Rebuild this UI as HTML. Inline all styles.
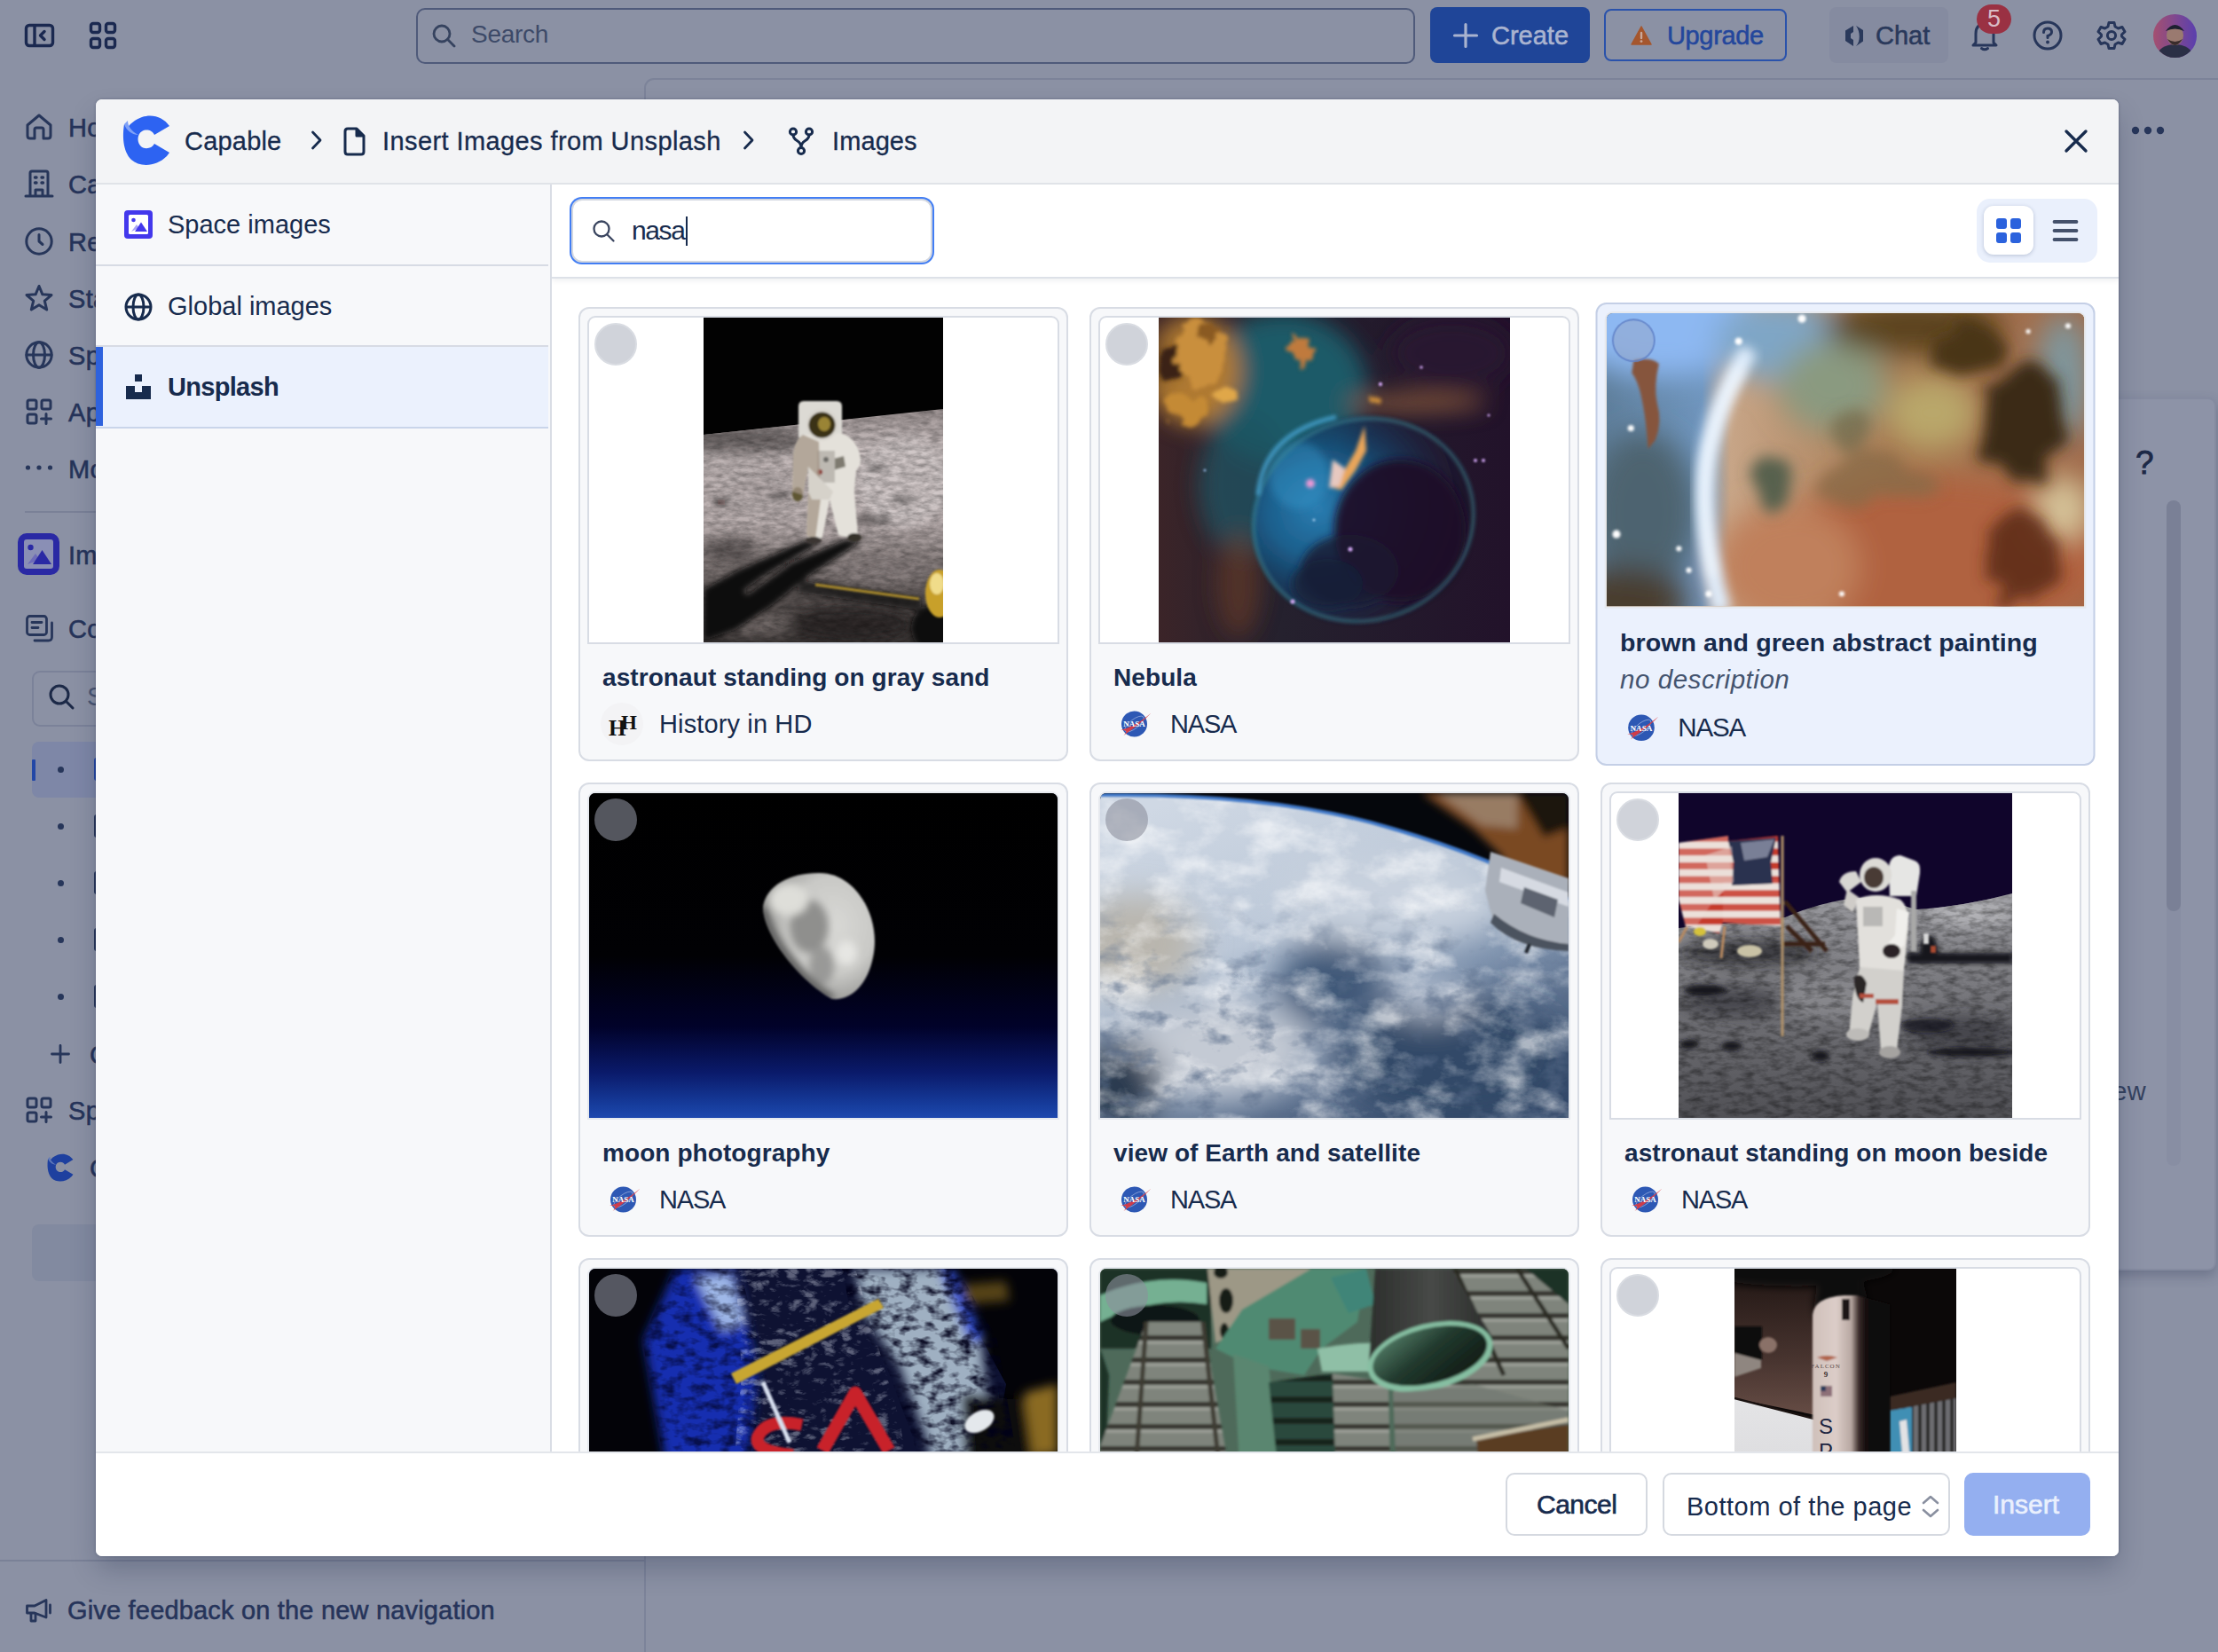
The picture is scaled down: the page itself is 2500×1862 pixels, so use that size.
<!DOCTYPE html>
<html lang="en">
<head>
<meta charset="utf-8">
<title>Insert Images from Unsplash</title>
<style>
*{box-sizing:border-box;margin:0;padding:0}
html,body{width:2500px;height:1862px;overflow:hidden}
body{font-family:"Liberation Sans",sans-serif;background:#8b91a4;color:#172b4d;position:relative}
.abs{position:absolute}
svg{display:block;position:absolute;overflow:visible}
.t{position:absolute;white-space:nowrap;line-height:1}
/* ---------- dimmed background page ---------- */
.bg .t{color:#26345a;font-size:29px;font-weight:normal;-webkit-text-stroke:.55px #26345a;letter-spacing:.3px}
.bgline{position:absolute;background:#7a8197}
/* ---------- modal ---------- */
#modal{position:absolute;left:108px;top:112px;width:2280px;height:1642px;background:#fff;border-radius:7px;box-shadow:0 16px 30px -2px rgba(20,30,60,.26),0 0 3px rgba(20,30,60,.35);overflow:hidden}
#mhead{position:absolute;left:0;top:0;width:100%;height:96px;background:#f3f4f6;border-bottom:2px solid #e0e3e8}
#mhead .t{font-size:29px;color:#172b4d;top:33px;-webkit-text-stroke:.3px #172b4d}
#side{position:absolute;left:0;top:96px;width:514px;height:1430px;background:#f7f8fa;border-right:2px solid #d9dde5}
.sitem{position:absolute;left:0;width:510px;height:92px;border-bottom:2px solid #d7dbe4}
.sitem .t{left:81px;top:31px;font-size:29px;letter-spacing:0}
.sitem.sel{background:#ebf1fd;border-bottom-color:#c9d5ea}
.sitem.sel:before{content:"";position:absolute;left:0;top:0;width:8px;height:89px;background:#2e62dd}
#main{position:absolute;left:514px;top:96px;width:1766px;height:1430px;background:#fff;overflow:hidden}
#sbar{position:absolute;left:0;top:0;width:100%;height:106px;background:#fff;border-bottom:2px solid #dde1e8;box-shadow:0 2px 6px rgba(30,40,70,.08);z-index:5}
#sinput{position:absolute;left:22px;top:16px;width:407px;height:72px;border:2px solid #d3d7df;border-radius:12px;box-shadow:0 0 0 2px #427ef4;background:#fff}
#mfoot{position:absolute;left:0;top:1524px;width:100%;height:118px;background:#fff;border-top:2px solid #e3e6eb}
.btn{position:absolute;top:22px;height:71px;border-radius:10px;border:2px solid #d5d9e0;background:#fff;font-size:30px;color:#172b4d}
.card{position:absolute;width:552px;height:512px;border:2px solid #d8dce4;border-radius:12px;background:#f7f8fa}
.card .imgbox{position:absolute;left:8px;top:8px;width:532px;height:370px;background:#fff;border:2px solid #d8dce4;border-radius:9px 9px 0 0;overflow:hidden}
.card .imgbox.full{border-color:#e6e9ee}
.card .ph{position:absolute;top:0;height:366px;overflow:hidden}
.card .chk{position:absolute;left:16px;top:16px;width:48px;height:48px;border-radius:50%;background:#d0d3da;border:2px solid #d9dce2;z-index:3}
.card .chk.dk{background:rgba(140,144,156,.6);border-color:transparent}
.card .ttl{left:25px;top:402px;font-size:28px;font-weight:bold;letter-spacing:.08px;color:#172b4d}
.card .auth{left:89px;top:454px;font-size:29px;color:#172b4d;letter-spacing:-1.2px}
.card .av{position:absolute;left:23px;top:444px;width:48px;height:48px}
.card.hov .chk{background:rgba(150,165,195,.45);border:2px solid rgba(90,125,200,.7)}
.card.hov{background:#ebf1fd;border-color:#c4cfe6;transform:scale(1.02);transform-origin:50% 50%}
#p1{background:#3a3433}#p2{background:#2a2030}#p3{background:#a0703f}#p4{background:#02030f}#p5{background:#7f8fa6}#p6{background:#55555a}#p7{background:#141a44}#p8{background:#5c6a5c}#p9{background:#2a2220}
</style>
</head>
<body>
<div class="bg" id="bg">
<svg style="left:28px;top:27px" width="33" height="26" viewBox="0 0 33 26"><g fill="none" stroke="#1b2950" stroke-width="3.4" stroke-linejoin="round" stroke-linecap="round"><rect x="1.5" y="1.5" width="30" height="23" rx="3.5"/><path d="M11 2 V24 M22 8.5 L17.5 13 L22 17.5"/></g></svg>
<svg style="left:101px;top:25px" width="30" height="30" viewBox="0 0 30 30"><g fill="none" stroke="#1b2950" stroke-width="3.4"><rect x="1.5" y="1.5" width="10" height="10" rx="2.5"/><rect x="18.5" y="1.5" width="10" height="10" rx="2.5"/><rect x="1.5" y="18.5" width="10" height="10" rx="2.5"/><rect x="18.5" y="18.5" width="10" height="10" rx="2.5"/></g></svg>
<div class="abs" style="left:469px;top:9px;width:1126px;height:63px;border:2px solid #4f5a7a;border-radius:10px"></div>
<svg style="left:487px;top:27px" width="27" height="27" viewBox="0 0 27 27"><circle cx="11" cy="11" r="9" fill="none" stroke="#36435f" stroke-width="2.8"/><path d="M17.6 17.6 L25 25" stroke="#36435f" stroke-width="2.8" stroke-linecap="round"/></svg>
<span class="t" style="left:531px;top:25px;font-weight:normal;color:#3d4a68;-webkit-text-stroke:0;font-size:28px;letter-spacing:-.3px">Search</span>
<div class="abs" style="left:1612px;top:8px;width:180px;height:63px;border-radius:8px;background:#1f4598"></div>
<svg style="left:1638px;top:26px" width="28" height="28" viewBox="0 0 28 28"><path d="M14 1.5 V26.5 M1.5 14 H26.5" stroke="#a9b3cf" stroke-width="3.2" stroke-linecap="round"/></svg>
<span class="t" style="left:1681px;top:26px;color:#aab4d0;-webkit-text-stroke:.55px #aab4d0;font-size:29px;letter-spacing:0">Create</span>
<div class="abs" style="left:1808px;top:10px;width:206px;height:59px;border-radius:8px;border:2px solid #2a52ab"></div>
<svg style="left:1838px;top:29px" width="24" height="22" viewBox="0 0 24 22"><path d="M12 1 L23 21 H1 Z" fill="#a5562d" stroke="#a5562d" stroke-width="1.5" stroke-linejoin="round"/><path d="M12 8 V14" stroke="#c9a89a" stroke-width="2.4" stroke-linecap="round"/><circle cx="12" cy="17.6" r="1.4" fill="#c9a89a"/></svg>
<span class="t" style="left:1879px;top:26px;color:#24479c;-webkit-text-stroke:.55px #24479c;font-size:29px;letter-spacing:-.35px">Upgrade</span>
<div class="abs" style="left:2062px;top:8px;width:134px;height:63px;border-radius:8px;background:#858ba0"></div>
<svg style="left:2078px;top:28px" width="24" height="25" viewBox="0 0 24 25"><path d="M11 1 L2 6.5 V18 L11 24 V17 L8 15 V10 L11 8 Z" fill="#2a395b"/><path d="M14 1 L22 6 V18.5 L14 24 C19 19 19 8 14 1 Z" fill="#2a395b"/></svg>
<span class="t" style="left:2114px;top:26px;color:#2a395b;-webkit-text-stroke:.55px #2a395b;font-size:29px;letter-spacing:0">Chat</span>
<svg style="left:2221px;top:24px" width="32" height="34" viewBox="0 0 32 34"><g fill="none" stroke="#27365a" stroke-width="3" stroke-linejoin="round" stroke-linecap="round"><path d="M6 24 V14 Q6 3 16 3 Q26 3 26 14 V24 L29 27 H3 Z"/><path d="M12.5 30.5 Q16 33 19.5 30.5"/></g></svg>
<div class="abs" style="left:2228px;top:5px;width:39px;height:33px;border-radius:17px;background:#9a3143"></div><span class="t" style="left:2240px;top:8px;color:#d9bcc6;-webkit-text-stroke:0;font-size:27px;font-weight:normal">5</span>
<svg style="left:2291px;top:23px" width="34" height="34" viewBox="0 0 34 34"><circle cx="17" cy="17" r="15" fill="none" stroke="#27365a" stroke-width="3"/><path d="M12.5 13.5 Q12.5 9 17 9 Q21.5 9 21.5 13 Q21.5 16 17 17.5 V19.5" fill="none" stroke="#27365a" stroke-width="3" stroke-linecap="round"/><circle cx="17" cy="24.5" r="1.9" fill="#27365a"/></svg>
<svg style="left:2363px;top:23px" width="34" height="34" viewBox="0 0 34 34"><g fill="none" stroke="#27365a" stroke-width="3" stroke-linejoin="round"><path d="M14 2.5 H20 L21 7 L24.5 9 L29 7.5 L32 12.7 L28.5 16 V18 L32 21.3 L29 26.5 L24.5 25 L21 27 L20 31.5 H14 L13 27 L9.5 25 L5 26.5 L2 21.3 L5.5 18 V16 L2 12.7 L5 7.5 L9.5 9 L13 7 Z"/><circle cx="17" cy="17" r="4.6"/></g></svg>
<svg style="left:2427px;top:16px" width="49" height="49" viewBox="0 0 49 49"><defs><linearGradient id="avg" x1="0" y1="0" x2="1" y2="0"><stop offset="0" stop-color="#a45070"/><stop offset="1" stop-color="#5a3fae"/></linearGradient><clipPath id="avc"><circle cx="24.5" cy="24.5" r="24.5"/></clipPath></defs><g clip-path="url(#avc)"><rect width="49" height="49" fill="url(#avg)"/><ellipse cx="24.5" cy="47" rx="20" ry="13" fill="#2a2f45"/><ellipse cx="24.5" cy="24" rx="9.5" ry="11" fill="#9a7a70"/><path d="M14 19 Q24.5 5 35 19 Q24.5 14 14 19 Z" fill="#1c2030"/><path d="M16 28 Q24.5 42 33 28 Q24.5 34 16 28 Z" fill="#3a2c2c"/></g></svg>
<div class="abs" style="left:726px;top:88px;width:1800px;height:1800px;border:2px solid #7c8399;border-radius:11px 0 0 0"></div>
<svg style="left:28px;top:127px" width="32" height="32" viewBox="0 0 32 32"><g fill="none" stroke="#27365a" stroke-width="3" stroke-linejoin="round" stroke-linecap="round"><path d="M3 14 L16 3 L29 14 V26 Q29 29 26 29 H21 V19 Q21 17 19 17 H13 Q11 17 11 19 V29 H6 Q3 29 3 26 Z"/></g></svg><span class="t" style="left:77px;top:130px">Home</span>
<svg style="left:28px;top:191px" width="32" height="32" viewBox="0 0 32 32"><g fill="none" stroke="#27365a" stroke-width="3" stroke-linejoin="round" stroke-linecap="round"><path d="M6 30 V4 Q6 2 8 2 H24 Q26 2 26 4 V30 M1 30 H31 M12 30 V23 H20 V30"/><path d="M11.5 9 H13 M19 9 H20.5 M11.5 15 H13 M19 15 H20.5" stroke-width="3.4"/></g></svg><span class="t" style="left:77px;top:194px">Capable</span>
<svg style="left:28px;top:256px" width="32" height="32" viewBox="0 0 32 32"><g fill="none" stroke="#27365a" stroke-width="3" stroke-linejoin="round" stroke-linecap="round"><circle cx="16" cy="16" r="14.2"/><path d="M16 8.5 V16 L20 19.5"/></g></svg><span class="t" style="left:77px;top:259px">Recent</span>
<svg style="left:28px;top:320px" width="32" height="32" viewBox="0 0 32 32"><g fill="none" stroke="#27365a" stroke-width="3" stroke-linejoin="round" stroke-linecap="round"><path d="M16 2.5 L19.9 11.8 L30 12.6 L22.3 19.2 L24.7 29 L16 23.7 L7.3 29 L9.7 19.2 L2 12.6 L12.1 11.8 Z"/></g></svg><span class="t" style="left:77px;top:323px">Starred</span>
<svg style="left:28px;top:384px" width="32" height="32" viewBox="0 0 32 32"><g fill="none" stroke="#27365a" stroke-width="3" stroke-linejoin="round" stroke-linecap="round"><circle cx="16" cy="16" r="14.2"/><ellipse cx="16" cy="16" rx="6.5" ry="14.2"/><path d="M2 16 H30"/></g></svg><span class="t" style="left:77px;top:387px">Spaces</span>
<svg style="left:28px;top:448px" width="32" height="32" viewBox="0 0 32 32"><g fill="none" stroke="#27365a" stroke-width="3" stroke-linejoin="round" stroke-linecap="round"><rect x="3" y="3" width="10" height="10" rx="2"/><rect x="19" y="3" width="10" height="10" rx="2"/><rect x="3" y="19" width="10" height="10" rx="2"/><path d="M24 18.5 V29.5 M18.5 24 H29.5"/></g></svg><span class="t" style="left:77px;top:451px">Apps</span>
<svg style="left:28px;top:522px" width="32" height="10" viewBox="0 0 32 10"><g fill="#27365a"><circle cx="3.5" cy="5" r="2.6"/><circle cx="16" cy="5" r="2.6"/><circle cx="28.5" cy="5" r="2.6"/></g></svg><span class="t" style="left:77px;top:515px">More</span>
<div class="bgline" style="left:28px;top:576px;width:690px;height:2px"></div>
<svg style="left:20px;top:601px" width="47" height="47" viewBox="0 0 47 47"><rect width="47" height="47" rx="10" fill="#2a29a4"/><rect x="7" y="7" width="33" height="33" rx="3" fill="#8a8fb5"/><circle cx="14.5" cy="16" r="3.2" fill="#2a29a4"/><path d="M11 35 L20 23 L25 30 Z" fill="#6d6bb8"/><path d="M17 35 L27.5 19 L38 35 Z" fill="#2a29a4"/></svg><span class="t" style="left:77px;top:612px">Images</span>
<svg style="left:29px;top:693px" width="32" height="31" viewBox="0 0 32 31"><g fill="none" stroke="#27365a" stroke-width="2.8" stroke-linejoin="round" stroke-linecap="round"><rect x="1.5" y="1.5" width="22" height="21" rx="3"/><path d="M7 8.5 H18 M7 14.5 H14"/><path d="M29.5 9 V25 Q29.5 29 25.5 29 H10"/></g></svg><span class="t" style="left:77px;top:695px">Content</span>
<div class="abs" style="left:36px;top:756px;width:660px;height:63px;border:2px solid #7b8299;border-radius:9px"></div>
<svg style="left:55px;top:771px" width="29" height="29" viewBox="0 0 29 29"><circle cx="12" cy="12" r="10" fill="none" stroke="#1c2947" stroke-width="3"/><path d="M19.5 19.5 L27 27" stroke="#1c2947" stroke-width="3" stroke-linecap="round"/></svg><span class="t" style="left:98px;top:771px;font-weight:normal;-webkit-text-stroke:0;color:#4a5673;font-size:29px">Search by title</span>
<div class="abs" style="left:36px;top:836px;width:660px;height:63px;border-radius:8px;background:#7e87a7"></div><div class="abs" style="left:36px;top:856px;width:4px;height:24px;background:#2347a6;border-radius:1px"></div>
<div class="abs" style="left:65px;top:864px;width:7px;height:7px;border-radius:50%;background:#27365a"></div>
<div class="abs" style="left:106px;top:854px;width:20px;height:26px;border:3px solid #2347a6;border-radius:3px"></div>
<div class="abs" style="left:65px;top:928px;width:7px;height:7px;border-radius:50%;background:#27365a"></div>
<div class="abs" style="left:106px;top:918px;width:20px;height:26px;border:3px solid #27365a;border-radius:3px"></div>
<div class="abs" style="left:65px;top:992px;width:7px;height:7px;border-radius:50%;background:#27365a"></div>
<div class="abs" style="left:106px;top:982px;width:20px;height:26px;border:3px solid #27365a;border-radius:3px"></div>
<div class="abs" style="left:65px;top:1056px;width:7px;height:7px;border-radius:50%;background:#27365a"></div>
<div class="abs" style="left:106px;top:1046px;width:20px;height:26px;border:3px solid #27365a;border-radius:3px"></div>
<div class="abs" style="left:65px;top:1120px;width:7px;height:7px;border-radius:50%;background:#27365a"></div>
<div class="abs" style="left:106px;top:1110px;width:20px;height:26px;border:3px solid #27365a;border-radius:3px"></div>
<svg style="left:57px;top:1177px" width="22" height="22" viewBox="0 0 22 22"><path d="M11 1.5 V20.5 M1.5 11 H20.5" stroke="#27365a" stroke-width="2.8" stroke-linecap="round"/></svg><span class="t" style="left:101px;top:1175px">Create</span>
<svg style="left:28px;top:1235px" width="32" height="32" viewBox="0 0 32 32"><g fill="none" stroke="#27365a" stroke-width="3" stroke-linejoin="round" stroke-linecap="round"><rect x="3" y="3" width="10" height="10" rx="2"/><rect x="19" y="3" width="10" height="10" rx="2"/><rect x="3" y="19" width="10" height="10" rx="2"/><path d="M24 18.5 V29.5 M18.5 24 H29.5"/></g></svg><span class="t" style="left:77px;top:1238px">Space apps</span>
<svg style="left:53px;top:1300px" width="30" height="32" viewBox="0 0 54 56"><path d="M2 10 C0 22 0 40 10 50 C20 59 38 58 50 46 L53 42 L36 32 C33 38 24 39 20 34 C16 29 17 21 22 18 C27 15 34 17 36 22 L53 12 C46 2 34 -2 22 2 C14 5 8 10 6 14 Z" fill="#1e409f"/><path d="M2 10 C4 16 10 22 18 22 C10 18 6 12 6 6 Z" fill="#5f78b8"/></svg><span class="t" style="left:101px;top:1303px">Capable</span>
<div class="abs" style="left:36px;top:1380px;width:660px;height:64px;border-radius:8px;background:#828aa0"></div>
<div class="bgline" style="left:0;top:1758px;width:727px;height:2px"></div>
<svg style="left:28px;top:1801px" width="32" height="30" viewBox="0 0 32 30"><g fill="none" stroke="#27365a" stroke-width="2.8" stroke-linejoin="round" stroke-linecap="round"><path d="M2.5 9 H11 L24 2.5 V22 L11 17 H2.5 Z"/><path d="M7 17.5 V26 H12 V18"/><path d="M28.5 8 V17"/></g></svg><span class="t" style="left:76px;top:1801px;letter-spacing:.18px">Give feedback on the new navigation</span>
<svg style="left:2402px;top:142px" width="38" height="10" viewBox="0 0 38 10"><g fill="#27365a"><circle cx="5" cy="5" r="4.2"/><circle cx="19" cy="5" r="4.2"/><circle cx="33" cy="5" r="4.2"/></g></svg>
<div class="abs" style="left:2200px;top:448px;width:298px;height:984px;border-radius:9px;background:#8d93a7;border:2px solid #858ba0;box-shadow:0 6px 14px rgba(40,50,80,.3)"></div>
<span class="t" style="left:2407px;top:503px;font-size:37px;font-weight:normal;color:#1c2947;-webkit-text-stroke:.8px #1c2947">?</span>
<div class="abs" style="left:2442px;top:564px;width:16px;height:750px;background:#888ea3;border-radius:8px"></div><div class="abs" style="left:2442px;top:564px;width:16px;height:463px;background:#7a8096;border-radius:8px"></div>
<span class="t" style="left:2359px;top:1216px;font-size:29px;font-weight:normal;-webkit-text-stroke:0;color:#35425f;letter-spacing:.6px">view</span>
</div>
<div id="modal">
  <div id="mhead">
    <svg style="left:30px;top:18px" width="54" height="56" viewBox="0 0 54 56"><path d="M2 10 C0 22 0 40 10 50 C20 59 38 58 50 46 L53 42 L36 32 C33 38 24 39 20 34 C16 29 17 21 22 18 C27 15 34 17 36 22 L53 12 C46 2 34 -2 22 2 C14 5 8 10 6 14 Z" fill="#2d63f2"/><path d="M2 10 C4 16 10 22 18 22 C10 18 6 12 6 6 Z" fill="#7fa1f6"/></svg>
    <span class="t" style="left:100px;letter-spacing:.2px">Capable</span>
    <svg style="left:242px;top:33px" width="14" height="26" viewBox="0 0 14 26"><path d="M2.500 4 L11 13 L2.500 22" fill="none" stroke="#172b4d" stroke-width="2.800" stroke-linecap="round" stroke-linejoin="round"/></svg>
    <svg style="left:279px;top:31px" width="25" height="33" viewBox="0 0 25 33"><path d="M5 2 H15 L23 10 V28 Q23 31 20 31 H5 Q2 31 2 28 V5 Q2 2 5 2 Z M15 2 V10 H23" fill="none" stroke="#172b4d" stroke-width="3" stroke-linejoin="round"/><path d="M15 2 V10 H23 Z" fill="#172b4d"/></svg>
    <span class="t" style="left:323px;letter-spacing:.41px">Insert Images from Unsplash</span>
    <svg style="left:729px;top:33px" width="14" height="26" viewBox="0 0 14 26"><path d="M2.500 4 L11 13 L2.500 22" fill="none" stroke="#172b4d" stroke-width="2.800" stroke-linecap="round" stroke-linejoin="round"/></svg>
    <svg style="left:780px;top:31px" width="30" height="33" viewBox="0 0 30 33"><g fill="none" stroke="#172b4d" stroke-width="3"><circle cx="6" cy="5.5" r="3.6"/><circle cx="24" cy="5.5" r="3.6"/><circle cx="15" cy="27" r="3.6"/><path d="M6 9 C6 17 15 14 15 23 M24 9 C24 17 15 14 15 23" stroke-linecap="round"/></g></svg>
    <span class="t" style="left:830px;letter-spacing:.1px">Images</span>
    <svg style="left:2219px;top:34px" width="26" height="26" viewBox="0 0 26 26"><path d="M2 2 L24 24 M24 2 L2 24" stroke="#172b4d" stroke-width="3.4" stroke-linecap="round"/></svg>
  </div>
  <div id="side">
    <div class="sitem" style="top:0">
      <svg style="left:32px;top:29px" width="32" height="32" viewBox="0 0 32 32"><rect x="0" y="0" width="32" height="32" rx="4" fill="#4338ec"/><rect x="5" y="5" width="22" height="22" rx="1.5" fill="#fff"/><circle cx="10.5" cy="11" r="2.3" fill="#4338ec"/><path d="M8 24 L14 16 L17 20 Z" fill="#a9a4f6"/><path d="M12 24 L19 13.5 L26 24 Z" fill="#4338ec"/></svg>
      <span class="t">Space images</span></div>
    <div class="sitem" style="top:92px;height:91px">
      <svg style="left:32px;top:30px" width="32" height="32" viewBox="0 0 32 32"><g fill="none" stroke="#172b4d" stroke-width="3"><circle cx="16" cy="16" r="14"/><ellipse cx="16" cy="16" rx="6" ry="14"/><path d="M2 16 H30"/></g></svg>
      <span class="t">Global images</span></div>
    <div class="sitem sel" style="top:183px">
      <svg style="left:34px;top:31px" width="28" height="28" viewBox="0 0 28 28"><path d="M10 0 H18 V8 H10 Z M0 13 H10 V20 H18 V13 H28 V28 H0 Z" fill="#172b4d"/></svg>
      <span class="t" style="font-weight:bold;letter-spacing:-.7px">Unsplash</span></div>
  </div>
  <div id="main"><div id="sbar"><div id="sinput">
      <svg style="left:22px;top:22px" width="25" height="25" viewBox="0 0 25 25"><circle cx="10" cy="10" r="8.5" fill="none" stroke="#3b4660" stroke-width="2.3"/><path d="M16.2 16.2 L23.5 23.5" stroke="#3b4660" stroke-width="2.3" stroke-linecap="round"/></svg>
      <span class="t" style="left:66px;top:19px;font-size:30px;letter-spacing:-1.4px;color:#172b4d">nasa</span>
      <div class="abs" style="left:127px;top:18px;width:2px;height:33px;background:#172b4d"></div>
    </div>
    <div class="abs" style="left:1606px;top:16px;width:136px;height:72px;border-radius:15px;background:#eaf0fc"></div>
    <div class="abs" style="left:1614px;top:24px;width:56px;height:55px;border-radius:11px;background:#fff;box-shadow:0 1px 4px rgba(30,50,100,.25)"></div>
    <svg style="left:1628px;top:38px" width="28" height="28" viewBox="0 0 28 28"><g fill="#2b62dd"><rect x="0" y="0" width="12" height="12" rx="3"/><rect x="16" y="0" width="12" height="12" rx="3"/><rect x="0" y="16" width="12" height="12" rx="3"/><rect x="16" y="16" width="12" height="12" rx="3"/></g></svg>
    <svg style="left:1692px;top:39px" width="28" height="26" viewBox="0 0 28 26"><path d="M1.5 3 H26.5 M1.5 13 H26.5 M1.5 23 H26.5" stroke="#44516b" stroke-width="3.8" stroke-linecap="round"/></svg>
  </div><div id="grid">
<div class="card " style="left:30px;top:138px"><div class="imgbox"><div class="ph" id="p1" style="left:129px;width:270px;height:366px"><svg width="270" height="366" viewBox="0 0 270 366"><defs><filter id="b1a" x="-20%" y="-20%" width="140%" height="140%"><feGaussianBlur stdDeviation="1.2"/></filter><filter id="b1b" x="-30%" y="-30%" width="160%" height="160%"><feGaussianBlur stdDeviation="7"/></filter><filter id="b1c" x="-30%" y="-30%" width="160%" height="160%"><feGaussianBlur stdDeviation="3"/></filter><filter id="n1" x="0" y="0" width="100%" height="100%"><feTurbulence type="fractalNoise" baseFrequency="0.09 0.2" numOctaves="3" seed="4"/><feColorMatrix values="0 0 0 0 0  0 0 0 0 0  0 0 0 0 0  0.9 0.9 0.9 0 -0.95"/></filter><linearGradient id="g1" x1="0" y1="0" x2="0" y2="1"><stop offset="0" stop-color="#9c9292"/><stop offset=".15" stop-color="#c4baba"/><stop offset=".48" stop-color="#bdb2b2"/><stop offset=".66" stop-color="#857c7b"/><stop offset=".82" stop-color="#5a5352"/><stop offset="1" stop-color="#3a3534"/></linearGradient><clipPath id="c1"><path d="M0 132 L270 103 V366 H0 Z"/></clipPath></defs><rect width="270" height="366" fill="#020202"/><path d="M0 132 L270 103 V366 H0 Z" fill="url(#g1)"/><g clip-path="url(#c1)"><g filter="url(#b1b)"><ellipse cx="225" cy="185" rx="55" ry="50" fill="#d2c9c9" opacity=".9"/><ellipse cx="60" cy="195" rx="50" ry="30" fill="#b5abab" opacity=".6"/><ellipse cx="200" cy="285" rx="60" ry="16" fill="#8e8584" opacity=".7"/><ellipse cx="60" cy="345" rx="45" ry="14" fill="#7a7271" opacity=".8"/><ellipse cx="165" cy="345" rx="70" ry="20" fill="#2a2625" opacity=".85"/><ellipse cx="30" cy="262" rx="30" ry="14" fill="#4d4746" opacity=".7"/><ellipse cx="40" cy="138" rx="90" ry="14" fill="#5e5757" opacity=".85"/></g><rect width="270" height="366" filter="url(#n1)" opacity=".3"/><g filter="url(#b1c)" fill="#0b0a0a"><path d="M112 252 L134 252 L70 290 L30 318 L0 332 V306 L40 284 Z"/><path d="M160 250 L178 252 L120 290 L80 322 L36 352 L0 364 V336 L50 312 L100 276 Z"/><path d="M0 310 L40 300 L60 330 L0 360 Z"/><path d="M110 296 L245 316 L245 330 L105 310 Z" opacity=".75"/><ellipse cx="258" cy="350" rx="24" ry="26"/><ellipse cx="195" cy="170" rx="10" ry="3" opacity=".5"/><ellipse cx="225" cy="205" rx="12" ry="3" opacity=".5"/><ellipse cx="20" cy="208" rx="9" ry="3.5" opacity=".6"/><ellipse cx="85" cy="200" rx="12" ry="3" opacity=".5"/><ellipse cx="190" cy="228" rx="22" ry="6" opacity=".35"/></g><path d="M126 301 L243 317" stroke="#a98a2a" stroke-width="3" filter="url(#b1a)"/><g filter="url(#b1a)"><ellipse cx="266" cy="311" rx="16" ry="27" fill="#c8a02c"/><ellipse cx="263" cy="300" rx="8" ry="12" fill="#f0dc8a"/></g></g><g filter="url(#b1a)"><path d="M107 100 Q107 94 113 94 H150 Q156 94 156 100 V135 H107 Z" fill="#dcdad4"/><path d="M112 132 Q100 140 101 165 L100 196 Q104 204 112 200 L118 168 L118 196 L116 246 Q124 252 134 248 L142 205 L152 245 Q164 250 174 244 L170 196 L172 172 Q180 166 175 150 Q168 132 152 130 Z" fill="#e4e1da"/><ellipse cx="133.5" cy="120.5" rx="18" ry="18" fill="#d9d6cf"/><ellipse cx="133.5" cy="121" rx="15" ry="14.5" fill="#3b3014"/><ellipse cx="136" cy="120" rx="7" ry="8" fill="#9a8436"/><ellipse cx="106" cy="199" rx="6" ry="8" fill="#5e5632"/><path d="M143 160 L158 156 L160 168 L146 172 Z" fill="#7e7a70"/><path d="M128 150 H148 V186 H128 Z" fill="#bdb9b2"/><circle cx="131" cy="174" r="3" fill="#8b2f2a"/><circle cx="138" cy="160" r="3" fill="#6c6a66"/><path d="M112 132 Q100 140 101 165 L100 196 L112 200 L118 168 L118 196 L116 246 L126 250 L132 205 L130 140 Z" fill="#a39384" opacity=".75"/><ellipse cx="124" cy="251" rx="9" ry="4" fill="#3a3632"/><ellipse cx="170" cy="248" rx="8" ry="5" fill="#35322c"/><path d="M118 168 L118 196 L122 205 L142 205 L146 196 Z" fill="#d6d2ca"/></g></svg></div></div><div class="chk"></div><span class="t ttl">astronaut standing on gray sand</span><svg class="av" viewBox="0 0 48 48"><circle cx="24" cy="24" r="24" fill="#f3f3f5"/><text x="9" y="37" font-family="Liberation Serif,serif" font-weight="bold" font-size="25" fill="#111">H</text><text x="23" y="30" font-family="Liberation Serif,serif" font-weight="bold" font-size="23" fill="#111">H</text></svg><span class="t auth" style="letter-spacing:.13px">History in HD</span></div>
<div class="card " style="left:606px;top:138px"><div class="imgbox"><div class="ph" id="p2" style="left:66px;width:396px;height:366px"><svg width="396" height="366" viewBox="0 0 396 366"><defs><filter id="b2a" x="-30%" y="-30%" width="160%" height="160%"><feGaussianBlur stdDeviation="12"/></filter><filter id="b2b" x="-30%" y="-30%" width="160%" height="160%"><feGaussianBlur stdDeviation="5"/></filter><filter id="b2c" x="-30%" y="-30%" width="160%" height="160%"><feGaussianBlur stdDeviation="2"/></filter><filter id="d2" x="-20%" y="-20%" width="140%" height="140%"><feTurbulence type="fractalNoise" baseFrequency="0.035" numOctaves="3" seed="7" result="t"/><feDisplacementMap in="SourceGraphic" in2="t" scale="38" xChannelSelector="R" yChannelSelector="G"/><feGaussianBlur stdDeviation="2.2"/></filter><filter id="b2d" x="-30%" y="-30%" width="160%" height="160%"><feGaussianBlur stdDeviation=".8"/></filter><linearGradient id="g2" x1="0" y1="0" x2="1" y2="0"><stop offset="0" stop-color="#3b2428"/><stop offset=".35" stop-color="#25212e"/><stop offset="1" stop-color="#22122a"/></linearGradient><radialGradient id="g2b" cx=".32" cy=".38" r=".75"><stop offset="0" stop-color="#2a7cb0"/><stop offset=".3" stop-color="#1c5f8c"/><stop offset=".55" stop-color="#153a5e" stop-opacity=".85"/><stop offset=".85" stop-color="#1c1830" stop-opacity=".5"/><stop offset="1" stop-color="#1c1428" stop-opacity=".2"/></radialGradient><clipPath id="c2"><rect width="396" height="366"/></clipPath></defs><g clip-path="url(#c2)"><rect width="396" height="366" fill="url(#g2)"/><g filter="url(#b2a)"><ellipse cx="140" cy="80" rx="95" ry="85" fill="#1b5a68"/><ellipse cx="95" cy="190" rx="50" ry="80" fill="#1f5360" opacity=".8"/><ellipse cx="40" cy="60" rx="52" ry="62" fill="#b07a30"/><ellipse cx="8" cy="52" rx="12" ry="18" fill="#2a1a12"/><ellipse cx="290" cy="96" rx="80" ry="10" fill="#8a5a3a" opacity=".9"/><ellipse cx="90" cy="300" rx="25" ry="60" fill="#6a3a26" opacity=".6"/><ellipse cx="330" cy="40" rx="70" ry="40" fill="#2a1730" opacity=".9"/></g><g filter="url(#d2)"><ellipse cx="45" cy="40" rx="33" ry="33" fill="#c98f3e"/><ellipse cx="14" cy="50" rx="12" ry="16" fill="#3a2414"/><ellipse cx="60" cy="20" rx="14" ry="10" fill="#8a5a24"/><ellipse cx="75" cy="88" rx="14" ry="10" fill="#e0a74a"/><ellipse cx="30" cy="100" rx="22" ry="14" fill="#c48a36"/><ellipse cx="163" cy="38" rx="18" ry="9" fill="#c07a3c"/><ellipse cx="240" cy="90" rx="8" ry="5" fill="#d0913a"/></g><ellipse cx="231" cy="228" rx="126" ry="116" fill="url(#g2b)" filter="url(#b2c)" transform="rotate(-18 231 228)"/><g filter="url(#b2b)"><ellipse cx="272" cy="240" rx="74" ry="80" fill="#1d1226" opacity=".94"/><ellipse cx="215" cy="285" rx="55" ry="40" fill="#1a1630" opacity=".8"/><ellipse cx="158" cy="178" rx="34" ry="38" fill="#3a9ad0" opacity=".42"/><ellipse cx="190" cy="300" rx="40" ry="28" fill="#15203a" opacity=".8"/></g><ellipse cx="231" cy="228" rx="125" ry="113" fill="none" stroke="#3f8f9a" stroke-width="3" opacity=".7" filter="url(#b2c)" transform="rotate(-18 231 228)"/><path d="M112 200 Q118 130 200 112" fill="none" stroke="#49a6d6" stroke-width="5" opacity=".8" filter="url(#b2c)"/><g filter="url(#b2c)"><path d="M232 122 L222 150 L206 178 L196 192 L206 194 L222 172 L234 150 Z" fill="#e9a55a"/><path d="M196 160 L192 192 L204 190 L210 170 Z" fill="#e6c8c0"/><circle cx="171" cy="187" r="5" fill="#f09ad6"/></g><g filter="url(#b2d)" fill="#c9a0ea"><circle cx="216" cy="261" r="2.6"/><circle cx="151" cy="320" r="2.6"/><circle cx="250" cy="75" r="2.2"/><circle cx="357" cy="161" r="2"/><circle cx="366" cy="161" r="2"/><circle cx="296" cy="56" r="1.8"/><circle cx="372" cy="110" r="1.6"/><circle cx="175" cy="228" r="1.6" fill="#9fc8ea"/><circle cx="52" cy="172" r="1.6" fill="#8fb0d8"/></g></g></svg></div></div><div class="chk"></div><span class="t ttl">Nebula</span><svg class="av" viewBox="0 0 48 48"><g transform="translate(1.5 0)"><circle cx="24" cy="24" r="14.500" fill="#2d58b4"/><ellipse cx="24" cy="24" rx="13" ry="5" fill="none" stroke="#c9d3ee" stroke-width=".7" transform="rotate(-38 24 24)" opacity=".7"/><path d="M8.500 31 C18 29 31 22 43 11.500 C32 23.500 20 31 12 37 C18 31 13 31 8.500 31 Z" fill="#e03a3e" opacity=".9"/><text x="24" y="27.200" font-family="Liberation Serif,serif" font-weight="bold" font-size="9" fill="#fff" text-anchor="middle">NASA</text></g></svg><span class="t auth">NASA</span></div>
<div class="card hov" style="left:1182px;top:138px"><div class="imgbox full" style="height:328px"><div class="ph" id="p3" style="left:0px;width:528px;height:324px"><svg width="528" height="324" viewBox="0 0 528 324"><defs><filter id="b3a" x="-30%" y="-30%" width="160%" height="160%"><feGaussianBlur stdDeviation="16"/></filter><filter id="b3b" x="-30%" y="-30%" width="160%" height="160%"><feGaussianBlur stdDeviation="6"/></filter><filter id="b3c" x="-30%" y="-30%" width="160%" height="160%"><feGaussianBlur stdDeviation="1.6"/></filter><filter id="d3" x="-10%" y="-10%" width="120%" height="120%"><feTurbulence type="fractalNoise" baseFrequency="0.022" numOctaves="4" seed="11" result="t"/><feDisplacementMap in="SourceGraphic" in2="t" scale="46" xChannelSelector="R" yChannelSelector="G"/><feGaussianBlur stdDeviation="8"/></filter><linearGradient id="g3" x1="0" y1="0" x2="1" y2="0"><stop offset="0" stop-color="#5f7f9c"/><stop offset=".2" stop-color="#6f95bd"/><stop offset=".26" stop-color="#c7a587"/><stop offset=".6" stop-color="#a77a52"/><stop offset="1" stop-color="#a06a4a"/></linearGradient><clipPath id="c3"><rect width="528" height="324"/></clipPath></defs><g clip-path="url(#c3)"><rect width="528" height="324" fill="url(#g3)"/><g filter="url(#b3a)"><ellipse cx="60" cy="10" rx="110" ry="60" fill="#8db8f2"/><ellipse cx="190" cy="30" rx="70" ry="45" fill="#7fa6c6"/><ellipse cx="40" cy="220" rx="60" ry="90" fill="#4d6470"/><ellipse cx="20" cy="320" rx="70" ry="40" fill="#4a3e2e"/><ellipse cx="360" cy="270" rx="200" ry="90" fill="#b0623f"/><ellipse cx="200" cy="280" rx="80" ry="70" fill="#c0805c"/><ellipse cx="250" cy="80" rx="60" ry="50" fill="#8a9a80"/><ellipse cx="360" cy="110" rx="50" ry="40" fill="#b9a76a"/><ellipse cx="340" cy="15" rx="100" ry="30" fill="#5a431e"/><ellipse cx="505" cy="70" rx="30" ry="70" fill="#7f969c"/><ellipse cx="505" cy="215" rx="30" ry="35" fill="#d6c49a"/></g><g filter="url(#d3)"><ellipse cx="462" cy="122" rx="45" ry="62" fill="#3b2a13"/><ellipse cx="400" cy="40" rx="40" ry="30" fill="#4a3616"/><ellipse cx="460" cy="265" rx="40" ry="50" fill="#5e2c1b" opacity=".9"/><ellipse cx="185" cy="188" rx="22" ry="30" fill="#57614e"/><ellipse cx="300" cy="185" rx="60" ry="25" fill="#8a6a48" opacity=".8"/><ellipse cx="270" cy="130" rx="25" ry="30" fill="#6f6a48" opacity=".7"/></g><path d="M158 40 Q120 100 110 165 Q102 240 128 330" fill="none" stroke="#e2f0ff" stroke-width="20" filter="url(#b3b)"/><path d="M150 60 Q116 120 110 175 Q106 230 118 290" fill="none" stroke="#ffffff" stroke-width="6" filter="url(#b3b)" opacity=".9"/><path d="M30 52 Q50 48 58 56 Q52 80 56 100 Q62 120 54 140 L46 150 Q44 120 40 100 Q36 76 28 66 Z" fill="#86553c" filter="url(#b3c)"/><g filter="url(#b3c)" fill="#fff"><circle cx="216" cy="6" r="4.5"/><circle cx="146" cy="31" r="4"/><circle cx="27" cy="127" r="3.5"/><circle cx="11" cy="244" r="4.5"/><circle cx="80" cy="260" r="3"/><circle cx="91" cy="284" r="3"/><circle cx="113" cy="310" r="3.5"/><circle cx="260" cy="310" r="3"/><circle cx="510" cy="14" r="3"/><circle cx="466" cy="20" r="2.5"/></g></g></svg></div></div><div class="chk dk"></div><span class="t ttl" style="top:360px">brown and green abstract painting</span><span class="t" style="left:25px;top:401px;font-size:29px;font-style:italic;letter-spacing:.5px;color:#44546f">no description</span><svg class="av" viewBox="0 0 48 48"><g transform="translate(1.5 0)"><circle cx="24" cy="24" r="14.500" fill="#2d58b4"/><ellipse cx="24" cy="24" rx="13" ry="5" fill="none" stroke="#c9d3ee" stroke-width=".7" transform="rotate(-38 24 24)" opacity=".7"/><path d="M8.500 31 C18 29 31 22 43 11.500 C32 23.500 20 31 12 37 C18 31 13 31 8.500 31 Z" fill="#e03a3e" opacity=".9"/><text x="24" y="27.200" font-family="Liberation Serif,serif" font-weight="bold" font-size="9" fill="#fff" text-anchor="middle">NASA</text></g></svg><span class="t auth">NASA</span></div>
<div class="card " style="left:30px;top:674px"><div class="imgbox full"><div class="ph" id="p4" style="left:0px;width:528px;height:366px"><svg width="528" height="366" viewBox="0 0 528 366"><defs><linearGradient id="g4" x1="0" y1="0" x2="0" y2="1"><stop offset="0" stop-color="#000"/><stop offset=".5" stop-color="#010104"/><stop offset=".72" stop-color="#01022a"/><stop offset=".86" stop-color="#0a1a6a"/><stop offset=".96" stop-color="#163c9c"/><stop offset="1" stop-color="#1d48ae"/></linearGradient><radialGradient id="g4m" cx=".62" cy=".42" r=".7"><stop offset="0" stop-color="#d9d9d6"/><stop offset=".55" stop-color="#c9c9c6"/><stop offset="1" stop-color="#8a8a88"/></radialGradient><filter id="b4" x="-20%" y="-20%" width="140%" height="140%"><feGaussianBlur stdDeviation="1.3"/></filter><filter id="b4b" x="-30%" y="-30%" width="160%" height="160%"><feGaussianBlur stdDeviation="4"/></filter><clipPath id="c4"><path d="M258 90 C300 88 330 140 320 185 C314 215 296 234 274 232 C238 212 196 160 196 128 C200 104 226 90 258 90 Z"/></clipPath></defs><rect width="528" height="366" fill="url(#g4)"/><g filter="url(#b4)"><path d="M258 90 C300 88 330 140 320 185 C314 215 296 234 274 232 C238 212 196 160 196 128 C200 104 226 90 258 90 Z" fill="url(#g4m)"/><g clip-path="url(#c4)" filter="url(#b4b)"><ellipse cx="248" cy="150" rx="22" ry="30" fill="#8f8f8d"/><ellipse cx="262" cy="195" rx="14" ry="22" fill="#999997"/><ellipse cx="290" cy="180" rx="12" ry="14" fill="#e6e6e3"/><ellipse cx="225" cy="120" rx="22" ry="18" fill="#deded9"/><path d="M196 128 C200 160 238 212 274 232" stroke="#555" stroke-width="10" fill="none"/></g></g></svg></div></div><div class="chk dk"></div><span class="t ttl">moon photography</span><svg class="av" viewBox="0 0 48 48"><g transform="translate(1.5 0)"><circle cx="24" cy="24" r="14.500" fill="#2d58b4"/><ellipse cx="24" cy="24" rx="13" ry="5" fill="none" stroke="#c9d3ee" stroke-width=".7" transform="rotate(-38 24 24)" opacity=".7"/><path d="M8.500 31 C18 29 31 22 43 11.500 C32 23.500 20 31 12 37 C18 31 13 31 8.500 31 Z" fill="#e03a3e" opacity=".9"/><text x="24" y="27.200" font-family="Liberation Serif,serif" font-weight="bold" font-size="9" fill="#fff" text-anchor="middle">NASA</text></g></svg><span class="t auth">NASA</span></div>
<div class="card " style="left:606px;top:674px"><div class="imgbox full"><div class="ph" id="p5" style="left:0px;width:528px;height:366px"><svg width="528" height="366" viewBox="0 0 528 366"><defs><filter id="b5a" x="-30%" y="-30%" width="160%" height="160%"><feGaussianBlur stdDeviation="18"/></filter><filter id="b5b" x="-30%" y="-30%" width="160%" height="160%"><feGaussianBlur stdDeviation="5"/></filter><filter id="b5c" x="-30%" y="-30%" width="160%" height="160%"><feGaussianBlur stdDeviation="1.2"/></filter><filter id="n5" x="0" y="0" width="100%" height="100%"><feTurbulence type="fractalNoise" baseFrequency="0.018 0.03" numOctaves="5" seed="3"/><feColorMatrix values="0 0 0 0 1  0 0 0 0 1  0 0 0 0 1  2.6 0 0 0 -1.15"/></filter><filter id="n5d" x="0" y="0" width="100%" height="100%"><feTurbulence type="fractalNoise" baseFrequency="0.03 0.045" numOctaves="4" seed="9"/><feColorMatrix values="0 0 0 0 .1  0 0 0 0 .15  0 0 0 0 .25  0 2.8 0 0 -1.45"/></filter><linearGradient id="g5" x1=".2" y1="0" x2=".75" y2="1"><stop offset="0" stop-color="#cfd8e4"/><stop offset=".4" stop-color="#bcc8d8"/><stop offset=".65" stop-color="#7f93ae"/><stop offset="1" stop-color="#34496a"/></linearGradient><clipPath id="c5"><rect width="528" height="366"/></clipPath><linearGradient id="m5g" x1="0" y1="0" x2="0" y2="1"><stop offset=".3" stop-color="#000"/><stop offset=".6" stop-color="#fff"/></linearGradient><mask id="m5"><rect width="528" height="366" fill="url(#m5g)"/></mask><clipPath id="c5e"><path d="M0 2 Q200 0 330 40 Q440 72 528 120 V366 H0 Z"/></clipPath></defs><g clip-path="url(#c5)"><rect width="528" height="366" fill="#05070c"/><g clip-path="url(#c5e)"><rect width="528" height="366" fill="url(#g5)"/><g filter="url(#b5a)"><ellipse cx="40" cy="170" rx="70" ry="55" fill="#b9b6ae"/><ellipse cx="262" cy="215" rx="60" ry="50" fill="#3f5878"/><ellipse cx="400" cy="300" rx="130" ry="70" fill="#314867"/><ellipse cx="130" cy="290" rx="110" ry="55" fill="#c4cad4"/><ellipse cx="330" cy="120" rx="130" ry="50" fill="#c8d1de"/><ellipse cx="20" cy="330" rx="50" ry="50" fill="#2b3a50"/><ellipse cx="370" cy="230" rx="45" ry="22" fill="#b5c0d0"/></g><rect width="528" height="366" filter="url(#n5)" opacity=".6"/><g mask="url(#m5)"><rect width="528" height="366" filter="url(#n5d)" opacity=".75"/></g></g><path d="M0 2 Q200 0 330 40 Q440 72 528 120" fill="none" stroke="#3f78c8" stroke-width="4" filter="url(#b5c)"/><g filter="url(#b5b)"><path d="M362 0 H528 V100 L470 110 L452 70 L420 40 Z" fill="#7a4a24"/><path d="M470 0 H528 V40 L500 50 Z" fill="#1c140e"/><path d="M380 0 L470 0 L470 40 L430 36 Z" fill="#a08874" opacity=".8"/></g><g filter="url(#b5c)"><path d="M440 66 L528 96 V172 Q480 172 442 140 L434 110 Z" fill="#aab0ba"/><path d="M452 84 L528 112 V128 L450 100 Z" fill="#d6dae2"/><path d="M478 106 L516 120 L512 140 L474 124 Z" fill="#5d6470"/><path d="M444 136 Q480 166 528 170 V178 Q470 176 440 146 Z" fill="#4c525e"/><path d="M484 170 L480 180" stroke="#1f232a" stroke-width="4"/></g></g></svg></div></div><div class="chk dk"></div><span class="t ttl">view of Earth and satellite</span><svg class="av" viewBox="0 0 48 48"><g transform="translate(1.5 0)"><circle cx="24" cy="24" r="14.500" fill="#2d58b4"/><ellipse cx="24" cy="24" rx="13" ry="5" fill="none" stroke="#c9d3ee" stroke-width=".7" transform="rotate(-38 24 24)" opacity=".7"/><path d="M8.500 31 C18 29 31 22 43 11.500 C32 23.500 20 31 12 37 C18 31 13 31 8.500 31 Z" fill="#e03a3e" opacity=".9"/><text x="24" y="27.200" font-family="Liberation Serif,serif" font-weight="bold" font-size="9" fill="#fff" text-anchor="middle">NASA</text></g></svg><span class="t auth">NASA</span></div>
<div class="card " style="left:1182px;top:674px"><div class="imgbox"><div class="ph" id="p6" style="left:76px;width:376px;height:366px"><svg width="376" height="366" viewBox="0 0 376 366"><defs><filter id="b6a" x="-20%" y="-20%" width="140%" height="140%"><feGaussianBlur stdDeviation="1.1"/></filter><filter id="b6b" x="-30%" y="-30%" width="160%" height="160%"><feGaussianBlur stdDeviation="9"/></filter><filter id="b6c" x="-30%" y="-30%" width="160%" height="160%"><feGaussianBlur stdDeviation="2.5"/></filter><filter id="n6" x="0" y="0" width="100%" height="100%"><feTurbulence type="fractalNoise" baseFrequency="0.07 0.16" numOctaves="3" seed="8"/><feColorMatrix values="0 0 0 0 0  0 0 0 0 0  0 0 0 0 0  1.6 0 0 0 -0.62"/></filter><linearGradient id="g6" x1="0" y1="0" x2="0" y2="1"><stop offset="0" stop-color="#9a9a9f"/><stop offset=".25" stop-color="#85858a"/><stop offset=".6" stop-color="#6c6c71"/><stop offset="1" stop-color="#505055"/></linearGradient><pattern id="st6" width="10" height="15.6" patternUnits="userSpaceOnUse"><rect width="10" height="7.8" fill="#c63a2c"/><rect y="7.8" width="10" height="7.8" fill="#eadfd8"/></pattern><clipPath id="c6"><path d="M0 152 L120 140 Q170 118 220 117 L268 131 Q320 128 376 113 V366 H0 Z"/></clipPath></defs><rect width="376" height="366" fill="#10052b"/><path d="M0 152 L120 140 Q170 118 220 117 L268 131 Q320 128 376 113 V366 H0 Z" fill="url(#g6)"/><g clip-path="url(#c6)"><g filter="url(#b6b)"><ellipse cx="330" cy="135" rx="50" ry="14" fill="#b6b6ba"/><ellipse cx="180" cy="230" rx="70" ry="25" fill="#8c8c90" opacity=".8"/><ellipse cx="60" cy="235" rx="60" ry="16" fill="#3c3c42" opacity=".8"/><ellipse cx="320" cy="270" rx="60" ry="20" fill="#3a3a40" opacity=".75"/><ellipse cx="80" cy="180" rx="80" ry="14" fill="#2a2a30" opacity=".85"/></g><rect width="376" height="366" filter="url(#n6)" opacity=".5"/><g filter="url(#b6c)" fill="#15151b"><rect x="258" y="180" width="118" height="12"/><ellipse cx="282" cy="176" rx="10" ry="16"/><ellipse cx="330" cy="292" rx="50" ry="5"/><ellipse cx="160" cy="296" rx="10" ry="6"/><ellipse cx="60" cy="285" rx="12" ry="5"/><ellipse cx="12" cy="283" rx="10" ry="5"/><ellipse cx="30" cy="222" rx="24" ry="6"/><ellipse cx="280" cy="262" rx="30" ry="8" opacity=".7"/></g></g><g filter="url(#b6a)"><path d="M120 122 L167 178 M150 178 L122 150 M118 170 H165" stroke="#3a2218" stroke-width="5" fill="none"/><path d="M10 150 L0 168 M52 150 L48 186" stroke="#b98a60" stroke-width="3"/><path d="M0 56 L56 48 L56 54 L112 48 L115 150 L50 146 L46 158 L8 150 L0 120 Z" fill="url(#st6)"/><path d="M0 56 L56 48 L60 100 L36 126 L20 150 L8 150 L0 120 Z" fill="#f0e4de" opacity=".28"/><path d="M50 100 L112 96 L115 150 L50 146 Z" fill="#fff" opacity=".12"/><path d="M56 54 L110 50 L104 78 L106 102 L60 104 L62 78 Z" fill="#2a3050"/><path d="M70 56 L108 52 L100 72 L74 76 Z" fill="#8d93a8" opacity=".8"/><path d="M30 70 L60 60 L62 100 L40 120 Z" fill="#e9ddd8" opacity=".5"/><rect x="115.5" y="48" width="3" height="226" fill="#b4946a"/><ellipse cx="24" cy="156" rx="7" ry="5" fill="#d6c23a"/><ellipse cx="80" cy="178" rx="14" ry="7" fill="#c9c2a6"/><ellipse cx="36" cy="170" rx="9" ry="6" fill="#cfcabc"/><path d="M237 84 Q238 70 250 70 L266 76 Q273 78 272 90 L268 116 H238 Z" fill="#e6e6e4"/><path d="M262 110 H268 V178 H262 Z" fill="#a9a9a8"/><ellipse cx="222" cy="92" rx="18" ry="19" fill="#dcdad6"/><ellipse cx="220" cy="95" rx="11" ry="12" fill="#4a3a36"/><path d="M181 100 Q184 88 200 88 L206 100 L190 112 Z" fill="#d8d6d2"/><path d="M190 108 L204 118 L196 134 L186 126 Z" fill="#cfccc8"/><path d="M200 120 Q222 110 250 120 Q262 130 258 160 L254 200 L226 204 L204 196 Z" fill="#e2e0dc"/><path d="M208 128 H230 V150 H208 Z" fill="#b9b8b6"/><path d="M246 130 L260 134 L254 172 L236 184 L232 174 L244 160 Z" fill="#f0efec"/><ellipse cx="240" cy="178" rx="10" ry="8" fill="#2a2426"/><path d="M204 196 L254 200 L252 240 L246 290 L228 292 L224 236 L214 272 L192 274 L196 230 Z" fill="#d2d0cc"/><path d="M198 208 Q206 200 212 214 L208 236 Q198 232 198 208 Z" fill="#2c2628"/><rect x="222" y="232" width="26" height="6" fill="#b5503c"/><rect x="204" y="226" width="16" height="5" fill="#b5503c"/><ellipse cx="202" cy="272" rx="13" ry="7" fill="#bdbbb8"/><ellipse cx="238" cy="292" rx="12" ry="7" fill="#a5a3a0"/><rect x="276" y="158" width="6" height="12" fill="#d8d8d8"/><rect x="284" y="172" width="6" height="8" fill="#a84a30"/></g></svg></div></div><div class="chk"></div><span class="t ttl">astronaut standing on moon beside</span><svg class="av" viewBox="0 0 48 48"><g transform="translate(1.5 0)"><circle cx="24" cy="24" r="14.500" fill="#2d58b4"/><ellipse cx="24" cy="24" rx="13" ry="5" fill="none" stroke="#c9d3ee" stroke-width=".7" transform="rotate(-38 24 24)" opacity=".7"/><path d="M8.500 31 C18 29 31 22 43 11.500 C32 23.500 20 31 12 37 C18 31 13 31 8.500 31 Z" fill="#e03a3e" opacity=".9"/><text x="24" y="27.200" font-family="Liberation Serif,serif" font-weight="bold" font-size="9" fill="#fff" text-anchor="middle">NASA</text></g></svg><span class="t auth">NASA</span></div>
<div class="card " style="left:30px;top:1210px"><div class="imgbox full"><div class="ph" id="p7" style="left:0px;width:528px;height:366px"><svg width="528" height="366" viewBox="0 0 528 366"><defs><filter id="b7a" x="-30%" y="-30%" width="160%" height="160%"><feGaussianBlur stdDeviation="6"/></filter><filter id="b7b" x="-30%" y="-30%" width="160%" height="160%"><feGaussianBlur stdDeviation="1.2"/></filter><filter id="n7" x="0" y="0" width="100%" height="100%"><feTurbulence type="turbulence" baseFrequency="0.05 0.09" numOctaves="3" seed="5"/><feColorMatrix values="0 0 0 0 .85  0 0 0 0 .9  0 0 0 0 1  3 0 0 0 -.9"/></filter><filter id="n7k" x="0" y="0" width="100%" height="100%"><feTurbulence type="fractalNoise" baseFrequency="0.06 0.1" numOctaves="3" seed="15"/><feColorMatrix values="0 0 0 0 0  0 0 0 0 0  0 0 0 0 .01  0 2.6 0 0 -1.1"/></filter><clipPath id="c7"><rect width="528" height="366"/></clipPath><clipPath id="c7w"><path d="M285 0 H415 L460 80 L480 200 L470 366 H400 L365 190 L335 110 L295 50 Z"/></clipPath><clipPath id="c7b"><path d="M95 0 L170 0 L200 120 L150 366 H110 L60 80 Z"/></clipPath></defs><g clip-path="url(#c7)"><rect width="528" height="366" fill="#030308"/><path d="M150 0 H400 L470 130 L430 366 H150 L170 120 Z" fill="#0e1232"/><g filter="url(#b7a)"><path d="M98 0 L165 0 L190 120 L160 366 H112 L62 80 Z" fill="#182eb0"/><path d="M120 10 L160 6 L175 60 L150 70 Z" fill="#9fb8e8"/><path d="M300 0 H400 L440 70 L450 150 L470 366 H420 L380 190 L350 110 L310 50 Z" fill="#9fb0c2"/><path d="M395 0 L410 0 L445 80 L430 84 Z" fill="#2a48d0"/><path d="M420 140 L500 150 L528 366 H430 Z" fill="#08080c"/><path d="M490 140 L528 130 V210 L500 210 Z" fill="#8a6a22"/><path d="M420 18 L470 14 L474 36 L424 40 Z" fill="#6a5418" opacity=".8"/></g><g clip-path="url(#c7w)"><rect width="528" height="366" filter="url(#n7k)" opacity=".9"/></g><g clip-path="url(#c7b)"><rect width="528" height="366" filter="url(#n7k)" opacity=".65"/></g><clipPath id="c7m"><path d="M165 0 H300 L350 170 L380 366 H150 L172 120 Z"/></clipPath><g clip-path="url(#c7m)"><rect width="528" height="366" filter="url(#n7)" opacity=".35"/></g><g filter="url(#b7b)"><path d="M160 118 L326 34 L332 44 L166 130 Z" fill="#c8a630"/><path d="M263 205 L300 140 L338 205" fill="none" stroke="#c8202c" stroke-width="15" stroke-linejoin="round"/><path d="M240 176 Q200 168 190 190 Q186 206 230 210" fill="none" stroke="#c8202c" stroke-width="14"/><path d="M196 128 L226 196" stroke="#d8e0f0" stroke-width="5"/><ellipse cx="440" cy="172" rx="18" ry="11" fill="#e4e8ec" transform="rotate(-30 440 172)"/></g></g></svg></div></div><div class="chk dk"></div></div>
<div class="card " style="left:606px;top:1210px"><div class="imgbox full"><div class="ph" id="p8" style="left:0px;width:528px;height:366px"><svg width="528" height="366" viewBox="0 0 528 366"><defs><filter id="b8a" x="-30%" y="-30%" width="160%" height="160%"><feGaussianBlur stdDeviation="5"/></filter><filter id="b8b" x="-30%" y="-30%" width="160%" height="160%"><feGaussianBlur stdDeviation="1.4"/></filter><linearGradient id="g8n" x1="0" y1="0" x2="1" y2="1"><stop offset="0" stop-color="#5c8a72"/><stop offset=".45" stop-color="#223a2e"/><stop offset="1" stop-color="#0a120e"/></linearGradient><linearGradient id="g8c" x1="0" y1="0" x2="1" y2="0"><stop offset="0" stop-color="#2c2e2c"/><stop offset=".5" stop-color="#474947"/><stop offset="1" stop-color="#2a2c2a"/></linearGradient><pattern id="r8" width="40" height="25" patternUnits="userSpaceOnUse"><rect width="40" height="25" fill="#7f847c"/><rect y="0" width="40" height="6" fill="#36362e"/><rect y="6" width="40" height="4" fill="#9a9d95"/></pattern><pattern id="r8d" width="40" height="24" patternUnits="userSpaceOnUse"><rect width="40" height="24" fill="#2c4a3c"/><rect y="0" width="40" height="7" fill="#14241c"/></pattern><clipPath id="c8"><rect width="528" height="366"/></clipPath></defs><g clip-path="url(#c8)"><rect width="528" height="366" fill="#4e6a5a"/><g filter="url(#b8b)"><rect x="0" y="0" width="125" height="90" fill="#1c3328"/><path d="M0 30 Q60 4 120 16 V40 Q60 30 0 60 Z" fill="#74b092"/><ellipse cx="62" cy="58" rx="50" ry="17" fill="#0f1712"/><path d="M0 90 L10 120 L0 366 Z" fill="#1c3328"/><path d="M52 60 H116 L170 366 H0 V200 Z" fill="url(#r8)"/><path d="M52 60 L30 366 M116 60 L150 366" stroke="#3c3a30" stroke-width="5"/><path d="M121 0 H238 L200 40 L160 46 V70 L130 84 Z" fill="#9d9886"/><ellipse cx="142" cy="36" rx="8" ry="14" fill="#151c18"/><ellipse cx="140" cy="70" rx="5" ry="9" fill="#151c18"/><ellipse cx="136" cy="4" rx="8" ry="7" fill="#151c18"/><path d="M160 46 L238 0 H300 L290 60 L250 90 L230 120 L170 110 L130 90 Z" fill="#4f8a72"/><path d="M260 10 L300 0 L310 40 L280 50 Z" fill="#3f8578"/><path d="M190 56 h30 v24 h-30 Z M226 68 h22 v22 h-22 Z" fill="#5a5346"/><path d="M245 90 Q300 80 330 86 L320 116 H250 Z" fill="#8fbfa6"/><path d="M150 96 L190 110 L220 366 H165 Z" fill="#5a8670"/><path d="M190 128 L262 118 L270 366 H215 Z" fill="url(#r8d)"/><path d="M262 118 L325 128 L330 366 H270 Z" fill="url(#r8)"/><path d="M395 0 H528 V366 H340 L330 140 Z" fill="url(#r8)"/><path d="M400 0 L455 120 M470 0 L528 90" stroke="#2a2a24" stroke-width="5"/><path d="M480 0 H528 V40 Z" fill="#1c3328"/><path d="M310 0 H396 L444 80 L302 120 Z" fill="url(#g8c)"/><ellipse cx="372" cy="99" rx="72" ry="37" fill="#86bfa2" transform="rotate(-14 372 99)"/><ellipse cx="372" cy="98" rx="66" ry="31" fill="url(#g8n)" transform="rotate(-14 372 99)"/><path d="M330 140 L420 130 L528 160 V366 H340 Z" fill="#6f746e" opacity=".55"/><path d="M424 190 L528 176 V366 H440 Z" fill="#5a3c22"/><path d="M420 192 L528 170" stroke="#c8c0a8" stroke-width="5"/></g></g></svg></div></div><div class="chk dk"></div></div>
<div class="card " style="left:1182px;top:1210px"><div class="imgbox"><div class="ph" id="p9" style="left:139px;width:250px;height:366px"><svg width="250" height="366" viewBox="0 0 250 366"><defs><filter id="b9a" x="-30%" y="-30%" width="160%" height="160%"><feGaussianBlur stdDeviation="5"/></filter><filter id="b9b" x="-30%" y="-30%" width="160%" height="160%"><feGaussianBlur stdDeviation="1"/></filter><linearGradient id="g9r" x1="0" y1="0" x2="1" y2="0"><stop offset="0" stop-color="#cfc0ba"/><stop offset=".3" stop-color="#dccdc8"/><stop offset=".5" stop-color="#b8a8a2"/><stop offset=".6" stop-color="#3a2c2a"/><stop offset=".7" stop-color="#120c0c"/><stop offset="1" stop-color="#0b0808"/></linearGradient><linearGradient id="g9c" x1="0" y1="0" x2="0" y2="1"><stop offset="0" stop-color="#0c0909"/><stop offset=".15" stop-color="#2a1d1a"/><stop offset=".6" stop-color="#493530"/><stop offset="1" stop-color="#6a5048"/></linearGradient><linearGradient id="g9w" x1="0" y1="0" x2="0" y2="1"><stop offset="0" stop-color="#e4e4e6"/><stop offset="1" stop-color="#cfcfd2"/></linearGradient><pattern id="v9" width="9" height="10" patternUnits="userSpaceOnUse"><rect width="9" height="10" fill="#6e6e72"/><rect width="4" height="10" fill="#2c2a2c"/></pattern><clipPath id="c9"><rect width="250" height="366"/></clipPath></defs><g clip-path="url(#c9)"><rect width="250" height="366" fill="#0b0808"/><path d="M0 0 H140 V175 L0 146 Z" fill="url(#g9c)"/><g filter="url(#b9a)"><ellipse cx="70" cy="0" rx="110" ry="20" fill="#0a0808"/><ellipse cx="120" cy="40" rx="30" ry="40" fill="#0d0a0a"/></g><path d="M0 146 L140 182 V366 H0 Z" fill="url(#g9w)"/><path d="M0 146 L140 182" stroke="#1a1210" stroke-width="2.5"/><g filter="url(#b9b)"><rect x="0" y="65" width="31" height="38" fill="#090707"/><ellipse cx="38" cy="86" rx="10" ry="9" fill="#8a7168"/><path d="M0 95 L30 103 L30 112 L0 122 Z" fill="#8f8680"/><path d="M175 150 L250 140 V366 H175 Z" fill="url(#v9)"/><path d="M175 160 L200 156 V366 H175 Z" fill="#3f8fb4"/><path d="M186 172 L194 170 L200 240 L192 242 Z" fill="#e2e2e4"/><path d="M175 144 L250 128 V146 L175 160 Z" fill="#3a2a24"/></g><g filter="url(#b9b)"><path d="M88 52 Q90 32 124 30 L138 30 L175 40 V366 H88 Z" fill="url(#g9r)"/><rect x="121" y="34" width="9" height="24" fill="#1a1414"/><path d="M93 100 Q104 96 116 100 L104 104 Z" fill="#b0624a"/><rect x="97" y="132" width="13" height="12" fill="#8d6f78"/><rect x="97" y="132" width="6" height="6" fill="#2a3a5a"/></g><text x="103" y="112" font-family="Liberation Serif,serif" font-size="7" fill="#5a4a48" text-anchor="middle" letter-spacing="1">FALCON</text><text x="103" y="122" font-family="Liberation Serif,serif" font-size="9" font-weight="bold" fill="#3a3030" text-anchor="middle">9</text><text x="103" y="186" font-family="Liberation Sans,sans-serif" font-size="24" fill="#1c2440" text-anchor="middle" transform="translate(0 0)">S</text><text x="103" y="214" font-family="Liberation Sans,sans-serif" font-size="24" fill="#1c2440" text-anchor="middle">P</text></g></svg></div></div><div class="chk"></div></div>
</div></div>
  <div id="mfoot">
    <div class="btn" style="left:1589px;width:160px"><span class="t" style="left:33px;top:19px;-webkit-text-stroke:.6px #172b4d;letter-spacing:-.5px">Cancel</span></div>
    <div class="btn" style="left:1766px;width:324px"><span class="t" style="left:25px;top:22px;font-size:29px;letter-spacing:.5px">Bottom of the page</span>
      <svg style="left:290px;top:23px" width="20" height="26" viewBox="0 0 20 26"><path d="M2 9 L10 2 L18 9 M2 17 L10 24 L18 17" fill="none" stroke="#8a90a0" stroke-width="2.6" stroke-linecap="round" stroke-linejoin="round"/></svg></div>
    <div class="btn" style="left:2106px;width:142px;background:#94aff0;border-color:#94aff0;color:#eaf0fd"><span class="t" style="left:30px;top:19px;-webkit-text-stroke:.6px #eaf0fd;letter-spacing:0;color:#eaf0fd">Insert</span></div>
  </div>
</div>
</body>
</html>
